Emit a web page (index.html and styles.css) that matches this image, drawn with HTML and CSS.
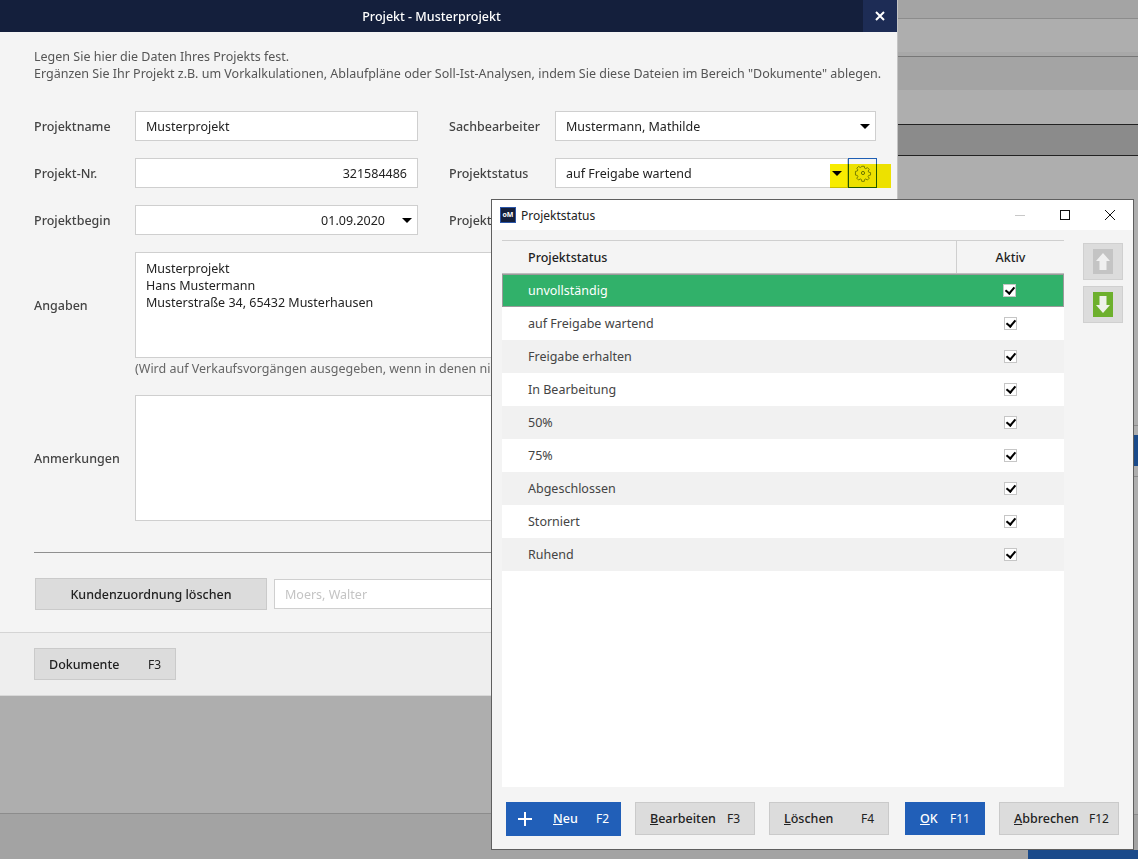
FILE: index.html
```html
<!DOCTYPE html>
<html lang="de">
<head>
  <meta charset="UTF-8" />
  <title>Projekt - Musterprojekt</title>
  <link rel="stylesheet" href="styles.css">
</head>
<body>
  <div class="left-col">
    <section class="project">
      <header class="project-title">
        <span class="project-title-text">Projekt - Musterprojekt</span>
        <span class="project-close">
          <svg width="10" height="10" viewBox="0 0 10 10"><path d="M1 1l8 8M9 1l-8 8" stroke="#fff" stroke-width="2"/></svg>
        </span>
      </header>
      <div class="project-body">
        <p class="intro">Legen Sie hier die Daten Ihres Projekts fest.<br>Ergänzen Sie Ihr Projekt z.B. um Vorkalkulationen, Ablaufpläne oder Soll-Ist-Analysen, indem Sie diese Dateien im Bereich "Dokumente" ablegen.</p>

        <div class="row">
          <label class="lbl">Projektname</label>
          <div class="field w-283">Musterprojekt</div>
          <label class="lbl lbl-2">Sachbearbeiter</label>
          <div class="field w-321">Mustermann, Mathilde<i class="caret"></i></div>
        </div>
        <div class="row">
          <label class="lbl">Projekt-Nr.</label>
          <div class="field w-283 right">321584486</div>
          <label class="lbl lbl-2">Projektstatus</label>
          <div class="field w-293">auf Freigabe wartend<i class="caret"></i></div>
          <button class="gear-btn">
            <svg width="18" height="18" viewBox="0 0 18 18" fill="none" stroke="#6f7f86" stroke-width="1">
              <path d="M7.6 1.5h2.8l.4 2.1 1.3.6 1.8-1.2 2 2-1.2 1.8.6 1.3 2.1.4v2.8l-2.1.4-.6 1.3 1.2 1.8-2 2-1.8-1.2-1.3.6-.4 2.1H7.6l-.4-2.1-1.3-.6-1.8 1.2-2-2 1.2-1.8-.6-1.3-2.1-.4V7.2l2.1-.4.6-1.3-1.2-1.8 2-2 1.8 1.2 1.3-.6z" transform="translate(.9 .9) scale(.9)"/>
              <circle cx="9" cy="9" r="1.6"/>
            </svg>
          </button>
        </div>
        <div class="row">
          <label class="lbl">Projektbegin</label>
          <div class="field w-283 right date">01.09.2020<i class="caret"></i></div>
          <label class="lbl lbl-2">Projektende</label>
          <div class="field w-321 right date"><i class="caret"></i></div>
        </div>
        <div class="row row-area">
          <label class="lbl">Angaben</label>
          <div class="field area h-106">Musterprojekt<br>Hans Mustermann<br>Musterstraße 34, 65432 Musterhausen</div>
        </div>
        <p class="hint">(Wird auf Verkaufsvorgängen ausgegeben, wenn in denen nichts anderes angegeben ist)</p>
        <div class="row row-area">
          <label class="lbl">Anmerkungen</label>
          <div class="field area h-126"></div>
        </div>
        <hr class="rule">
        <div class="row customer">
          <button class="btn btn-customer">Kundenzuordnung löschen</button>
          <div class="field customer-name">Moers, Walter</div>
        </div>
      </div>
      <footer class="project-foot">
        <button class="btn btn-docs"><span>Dokumente</span><span class="key">F3</span></button>
      </footer>
    </section>
    <div class="left-rest"></div>
    <div class="left-bottom"></div>
  </div>

  <div class="right-col">
    <div class="band b-a h-18"></div>
    <div class="band b-b h-33 line-soft"></div>
    <div class="band b-c h-4"></div>
    <div class="band b-a h-33 line-mid"></div>
    <div class="band b-b h-33"></div>
    <div class="band b-dark h-31 line-dark"></div>
    <div class="band b-b h-269 line-dark"></div>
    <div class="band b-b h-10 line-soft"></div>
    <div class="band b-blue h-31"></div>
    <div class="band b-b h-10"></div>
    <div class="band b-b h-337 line-soft"></div>
    <div class="band b-foot line-soft"><div class="foot-blue"></div></div>
  </div>

  <!-- highlight from the screenshot, sits over the status row -->
  <div class="marker"></div>

  <section class="status-win">
    <header class="win-title">
      <span class="win-logo">oM</span>
      <span class="win-name">Projektstatus</span>
      <span class="win-controls">
        <svg width="12" height="12" viewBox="0 0 12 12"><path d="M1 6.5h10" stroke="#c8c8c8"/></svg>
        <svg width="12" height="12" viewBox="0 0 12 12"><rect x="1.5" y="1.5" width="9" height="9" fill="none" stroke="#111"/></svg>
        <svg width="12" height="12" viewBox="0 0 12 12"><path d="M1 1l10 10M11 1L1 11" stroke="#111"/></svg>
      </span>
    </header>
    <div class="win-body">
      <div class="grid">
        <div class="grid-head">
          <div class="col-name">Projektstatus</div>
          <div class="col-active">Aktiv</div>
        </div>
        <div class="grid-row selected"><div class="col-name">unvollständig</div><div class="col-active"><i class="check"></i></div></div>
        <div class="grid-row"><div class="col-name">auf Freigabe wartend</div><div class="col-active"><i class="check"></i></div></div>
        <div class="grid-row alt"><div class="col-name">Freigabe erhalten</div><div class="col-active"><i class="check"></i></div></div>
        <div class="grid-row"><div class="col-name">In Bearbeitung</div><div class="col-active"><i class="check"></i></div></div>
        <div class="grid-row alt"><div class="col-name">50%</div><div class="col-active"><i class="check"></i></div></div>
        <div class="grid-row"><div class="col-name">75%</div><div class="col-active"><i class="check"></i></div></div>
        <div class="grid-row alt"><div class="col-name">Abgeschlossen</div><div class="col-active"><i class="check"></i></div></div>
        <div class="grid-row"><div class="col-name">Storniert</div><div class="col-active"><i class="check"></i></div></div>
        <div class="grid-row alt"><div class="col-name">Ruhend</div><div class="col-active"><i class="check"></i></div></div>
      </div>
      <div class="move-btns">
        <button class="move">
          <svg width="20" height="25" viewBox="0 0 20 25"><rect width="20" height="25" fill="#c4c4c4"/><path d="M10 4l7 8h-3.500v9h-7v-9H3z" fill="#f0f0f0"/></svg>
        </button>
        <button class="move">
          <svg width="20" height="25" viewBox="0 0 20 25"><rect width="20" height="25" fill="#6db02d"/><path d="M6.500 4h7v9H17l-7 8-7-8h3.500z" fill="#eef2ea"/></svg>
        </button>
      </div>
    </div>
    <footer class="win-foot">
      <button class="btn blue btn-new">
        <svg width="16" height="16" viewBox="0 0 16 16"><path d="M8 1v14M1 8h14" stroke="#fff" stroke-width="2"/></svg>
        <span class="new-label"><u>N</u>eu</span><span class="key">F2</span>
      </button>
      <button class="btn btn-120"><span><u>B</u>earbeiten</span><span class="key">F3</span></button>
      <button class="btn btn-120"><span><u>L</u>öschen</span><span class="key">F4</span></button>
      <button class="btn blue btn-ok"><span><u>O</u>K</span><span class="key">F11</span></button>
      <button class="btn btn-120 btn-abort"><span><u>A</u>bbrechen</span><span class="key">F12</span></button>
    </footer>
  </section>
</body>
</html>
```

FILE: styles.css
```css
* {
  box-sizing: border-box;
}
body {
  margin: 0;
  width: 1138px;
  height: 859px;
  overflow: hidden;
  display: flex;
  position: relative;
  background: #aeaeae;
  color: #333;
  font-family: 'Noto Sans', 'Open Sans', sans-serif;
  font-size: 12.5px;
}
button {
  font: inherit;
  color: inherit;
  cursor: pointer;
}

/* background */
.left-col {
  width: 898px;
  height: 859px;
  display: flex;
  flex-direction: column;
  flex-shrink: 0;
}
.left-rest {
  height: 117px;
  background: #aeaeae;
}
.left-bottom {
  flex: 1;
  background: #a3a3a3;
  border-top: 1px solid #8c8c8c;
}
.right-col {
  flex: 1;
  display: flex;
  flex-direction: column;
}
.band { flex-shrink: 0; }
.b-a { background: #a4a4a4; }
.b-b { background: #aeaeae; }
.b-c { background: #a8a8a8; }
.b-dark { background: #8b8b8b; }
.b-blue { background: #1a4a8a; }
.b-foot {
  flex: 1;
  background: #a3a3a3;
  display: flex;
  justify-content: flex-end;
  align-items: flex-end;
}
.foot-blue {
  width: 110px;
  height: 9px;
  background: #1a4a8a;
}
.h-18 { height: 18px; }
.h-33 { height: 34px; }
.h-4 { height: 4px; }
.h-31 { height: 31px; }
.h-269 { height: 270px; }
.h-10 { height: 10px; }
.h-337 { height: 338px; }
.line-soft { border-top: 1px solid #8c8c8c; }
.line-mid { border-top: 1px solid #777; }
.line-dark { border-top: 1px solid #222; }

/* project dialog */
.project {
  height: 696px;
  background: #f4f4f4;
  border-right: 1px solid #c4c4c4;
  display: flex;
  flex-direction: column;
  flex-shrink: 0;
}
.project-title {
  height: 32px;
  background: #141f3c;
  color: #fff;
  display: flex;
  align-items: center;
  flex-shrink: 0;
}
.project-title-text {
  flex: 1;
  text-align: center;
  font-weight: 500;
  padding-left: 0;
  font-size: 12.5px;
}
.project-close {
  width: 34px;
  height: 32px;
  background: #1d2c55;
  display: flex;
  align-items: center;
  justify-content: center;
}
.project-body {
  flex: 1;
  padding: 16px 0 0 34px;
}
.intro {
  margin: 0 0 29px;
  line-height: 17px;
  color: #555;
}
.row {
  display: flex;
  align-items: center;
  margin-bottom: 17px;
}
.lbl {
  width: 101px;
  font-weight: 500;
  color: #444;
  flex-shrink: 0;
}
.lbl-2 {
  width: 106px;
  margin-left: 31px;
}
.field {
  height: 30px;
  background: #fff;
  border: 1px solid #cfcfcf;
  padding: 0 10px;
  display: flex;
  align-items: center;
  position: relative;
  color: #222;
}
.w-283 { width: 283px; }
.w-321 { width: 321px; }
.w-293 { width: 293px; }
.right {
  justify-content: flex-end;
}
.date {
  padding-right: 32px;
}
.caret {
  position: absolute;
  right: 5px;
  top: 12px;
  width: 0;
  height: 0;
  border-left: 5px solid transparent;
  border-right: 5px solid transparent;
  border-top: 5px solid #000;
}
.gear-btn {
  width: 29px;
  height: 30px;
  padding: 0;
  background: #f4f4f4;
  border: 1px solid #1f5fb4;
  display: flex;
  align-items: center;
  justify-content: center;
}
.row-area {
  margin-bottom: 0;
}
.area {
  width: 741px;
  display: block;
  padding: 7px 10px;
  line-height: 17px;
}
.h-106 { height: 106px; }
.h-126 { height: 126px; }
.hint {
  margin: 2px 0 18px 101px;
  height: 17px;
  line-height: 17px;
  color: #666;
}
.rule {
  margin: 31px 0 25px;
  width: 842px;
  border: 0;
  border-top: 1px solid #8f8f8f;
}
.customer {
  margin-bottom: 0;
}
.btn {
  background: #dcdcdc;
  border: 1px solid #cacaca;
  display: flex;
  align-items: center;
  justify-content: space-between;
  font-weight: 500;
  color: #222;
  padding: 0 14px;
}
.btn-customer {
  width: 232px;
  height: 32px;
  margin-left: 1px;
  justify-content: center;
}
.customer-name {
  width: 560px;
  margin-left: 7px;
  color: #c4c4c4;
}
.project-foot {
  height: 64px;
  background: #eeeeee;
  border-top: 1px solid #d4d4d4;
  border-bottom: 1px solid #d8d8d8;
  padding: 15px 0 0 34px;
  flex-shrink: 0;
}
.btn-docs {
  width: 142px;
  height: 32px;
}
.key {
  font-weight: 400;
  font-size: 12px;
}

/* yellow marker */
.marker {
  position: absolute;
  left: 830px;
  top: 164px;
  width: 61px;
  height: 24px;
  background: #f8ec00;
  mix-blend-mode: multiply;
}

/* status window */
.status-win {
  position: absolute;
  left: 491px;
  top: 199px;
  width: 643px;
  height: 651px;
  background: #f4f4f4;
  border: 1px solid #5f5f5f;
  display: flex;
  flex-direction: column;
}
.win-title {
  height: 30px;
  background: #fff;
  display: flex;
  align-items: center;
  padding-left: 8px;
  flex-shrink: 0;
}
.win-logo {
  width: 16px;
  height: 16px;
  background: #141f3c;
  border: 1px solid #2a55a8;
  color: #fff;
  font-size: 7px;
  font-weight: 700;
  line-height: 14px;
  text-align: center;
}
.win-name {
  margin-left: 5px;
  font-size: 12px;
  color: #222;
}
.win-controls {
  margin-left: auto;
  display: flex;
  gap: 33px;
  padding-right: 17px;
}
.win-body {
  flex: 1;
  display: flex;
  padding: 10px 0 0 10px;
  min-height: 0;
}
.grid {
  width: 562px;
  height: 547px;
  background: #fff;
}
.grid-head {
  height: 34px;
  display: flex;
  align-items: center;
  background: #f4f4f4;
  border-top: 1px solid #cfcfcf;
  border-bottom: 1px solid #bdbdbd;
  font-weight: 500;
  color: #222;
}
.grid-head .col-active {
  border-left: 1px solid #cfcfcf;
  height: 100%;
  display: flex;
  align-items: center;
  justify-content: center;
}
.grid-row {
  height: 33px;
  display: flex;
  align-items: center;
  color: #444;
}
.grid-row.alt {
  background: #f1f1f1;
}
.grid-row.selected {
  background: #31b16a;
  color: #fff;
  border: 1px solid #9a9a9a;
  border-top-width: 1px;
}
.col-name {
  flex: 1;
  padding-left: 26px;
}
.col-active {
  width: 108px;
  display: flex;
  justify-content: center;
}
.selected .col-name {
  padding-left: 25px;
}
.check {
  width: 13px;
  height: 13px;
  background: #fff;
  border: 1px solid #c6c6c6;
  position: relative;
  display: block;
}
.check::after {
  content: "";
  position: absolute;
  left: 3px;
  top: 0;
  width: 4px;
  height: 7px;
  border: solid #000;
  border-width: 0 2px 2px 0;
  transform: rotate(40deg);
}
.move-btns {
  margin-left: 19px;
  margin-top: 3px;
  display: flex;
  flex-direction: column;
  gap: 6px;
}
.move {
  width: 40px;
  height: 37px;
  padding: 0;
  background: #dcdcdc;
  border: 1px solid #d0d0d0;
  display: flex;
  align-items: center;
  justify-content: center;
}
.win-foot {
  height: 53px;
  display: flex;
  align-items: center;
  padding: 0 0 8px 14px;
  flex-shrink: 0;
}
.btn-120 {
  width: 120px;
  height: 33px;
}
.blue {
  background: #215fb8;
  border-color: #215fb8;
  color: #fff;
}
.btn-new {
  width: 115px;
  height: 34px;
  padding: 0 11px 0 10px;
  margin-right: 14px;
}
.new-label {
  margin-left: 20px;
  margin-right: auto;
}
.btn-120 + .btn-120 {
  margin-left: 14px;
}
.btn-ok {
  width: 80px;
  height: 33px;
  margin-left: 16px;
}
.btn-abort {
  margin-left: 14px;
}
.btn-abort {
  padding-right: 9px;
}
```
